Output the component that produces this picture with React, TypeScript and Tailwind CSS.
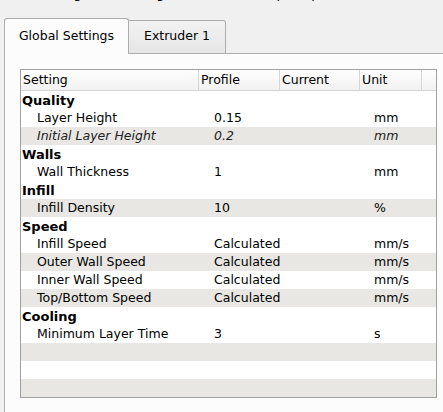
type Row = {
  label?: string;
  profile?: string;
  current?: string;
  unit?: string;
  kind: "category" | "setting" | "empty";
  italic?: boolean;
  shaded?: boolean;
};

const rows: Row[] = [
  { kind: "category", label: "Quality" },
  { kind: "setting", label: "Layer Height", profile: "0.15", unit: "mm" },
  { kind: "setting", label: "Initial Layer Height", profile: "0.2", unit: "mm", italic: true, shaded: true },
  { kind: "category", label: "Walls" },
  { kind: "setting", label: "Wall Thickness", profile: "1", unit: "mm" },
  { kind: "category", label: "Infill" },
  { kind: "setting", label: "Infill Density", profile: "10", unit: "%", shaded: true },
  { kind: "category", label: "Speed" },
  { kind: "setting", label: "Infill Speed", profile: "Calculated", unit: "mm/s" },
  { kind: "setting", label: "Outer Wall Speed", profile: "Calculated", unit: "mm/s", shaded: true },
  { kind: "setting", label: "Inner Wall Speed", profile: "Calculated", unit: "mm/s" },
  { kind: "setting", label: "Top/Bottom Speed", profile: "Calculated", unit: "mm/s", shaded: true },
  { kind: "category", label: "Cooling" },
  { kind: "setting", label: "Minimum Layer Time", profile: "3", unit: "s" },
  { kind: "empty", shaded: true },
  { kind: "empty" },
  { kind: "empty", shaded: true },
];

function TableRow({ row }: { row: Row }) {
  const bg = row.shaded ? "bg-[#e8e7e3]" : "bg-white";
  const style = row.italic ? "italic text-[#222]" : "text-black";

  if (row.kind === "category") {
    return (
      <div className={`flex h-[18px] items-center ${bg}`}>
        <span className="pl-[1px] text-[13px] font-bold text-black">{row.label}</span>
      </div>
    );
  }

  return (
    <div className={`flex h-[18px] items-center ${bg} ${style}`}>
      <div className="w-[178px] pl-[16px] whitespace-nowrap">{row.label}</div>
      <div className="w-[81px] pl-[15px] whitespace-nowrap">{row.profile}</div>
      <div className="w-[80px] pl-[15px] whitespace-nowrap">{row.current}</div>
      <div className="w-[62px] pl-[14px] whitespace-nowrap">{row.unit}</div>
      <div className="flex-1" />
    </div>
  );
}

export default function App() {
  return (
    <div
      className="h-[412px] w-[443px] overflow-hidden bg-[#f0f0f0] text-[12.5px] leading-none"
      style={{ fontFamily: '"DejaVu Sans", Tahoma, sans-serif' }}
    >
      {/* title line, mostly scrolled out of view */}
      <div className="h-[18px] overflow-hidden">
        <p className="-mt-[14px] pl-[40px] whitespace-nowrap text-[13px] leading-[15px] text-black">
          Change the settings of the selected print profile
        </p>
      </div>

      {/* tabs */}
      <div className="relative z-10 -mb-px flex h-[36px] items-end pl-[4px]">
        <div className="flex h-[36px] w-[125px] items-center justify-center rounded-t-[3px] border border-b-0 border-[#adadad] bg-[#fcfcfc] pb-[1px] text-black">
          Global Settings
        </div>
        <div className="flex h-[34px] w-[97px] items-center justify-center rounded-tr-[3px] border border-l-0 border-[#adadad] bg-gradient-to-b from-[#f2f2f2] to-[#e6e6e6] pb-[1px] text-black">
          Extruder 1
        </div>
      </div>

      {/* pane */}
      <div className="ml-[4px] h-[400px] border-t border-l border-[#adadad] bg-[#fcfcfc] pt-[15px] pl-[15px]">
        <div className="w-[417px] border border-[#a0a0a0] bg-white">
          <div className="flex h-[21px] items-center border-b border-[#d5d5d5] bg-gradient-to-b from-white to-[#f1f1f1] text-black">
            <div className="flex h-full w-[178px] items-center border-r border-[#d5d5d5] pl-[2px]">Setting</div>
            <div className="flex h-full w-[81px] items-center border-r border-[#d5d5d5] pl-[2px]">Profile</div>
            <div className="flex h-full w-[80px] items-center border-r border-[#d5d5d5] pl-[2px]">Current</div>
            <div className="flex h-full w-[62px] items-center border-r border-[#d5d5d5] pl-[2px]">Unit</div>
            <div className="h-full flex-1" />
          </div>
          {rows.map((row, i) => (
            <TableRow key={i} row={row} />
          ))}
        </div>
      </div>
    </div>
  );
}
